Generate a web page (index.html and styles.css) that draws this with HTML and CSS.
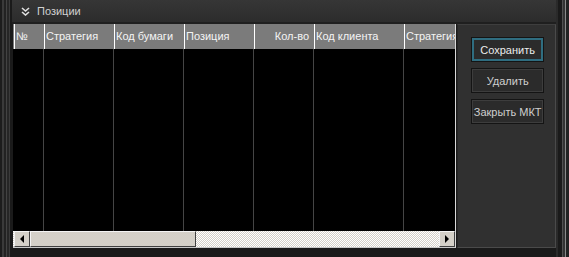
FILE: index.html
```html
<!DOCTYPE html>
<html lang="ru">
<head>
    <meta charset="UTF-8">
    <title>Позиции</title>
    <link rel="stylesheet" href="styles.css">
</head>
<body>
    <div class="frame">
        <div class="edge-left"></div>
        <div class="main">
            <div class="panel-head">
                <svg class="chevron" width="9" height="9" viewBox="0 0 9 9">
                    <path d="M1 1 L4.5 4 L8 1 M1 5 L4.5 8 L8 5" fill="none" stroke="#e0e0e0" stroke-width="1.6"/>
                </svg>
                <span class="panel-title">Позиции</span>
            </div>
            <div class="panel-body">
                <div class="grid">
                    <div class="grid-header">
                        <div class="hcell c1">№</div>
                        <div class="hcell c2">Стратегия</div>
                        <div class="hcell c3">Код бумаги</div>
                        <div class="hcell c4">Позиция</div>
                        <div class="hcell c5 right">Кол-во</div>
                        <div class="hcell c6">Код клиента</div>
                        <div class="hcell c7">Стратегия</div>
                    </div>
                    <div class="grid-rows">
                        <div class="col b1"></div>
                        <div class="col b2"></div>
                        <div class="col b3"></div>
                        <div class="col b4"></div>
                        <div class="col b5"></div>
                        <div class="col b6"></div>
                        <div class="col b7"></div>
                    </div>
                    <div class="hscroll">
                        <div class="scroll-btn"><span class="arrow-left"></span></div>
                        <div class="scroll-thumb"></div>
                        <div class="scroll-track"></div>
                        <div class="scroll-btn"><span class="arrow-right"></span></div>
                    </div>
                </div>
                <div class="actions">
                    <div class="btn primary">Сохранить</div>
                    <div class="btn">Удалить</div>
                    <div class="btn">Закрыть МКТ</div>
                </div>
            </div>
        </div>
        <div class="edge-right"></div>
    </div>
</body>
</html>
```

FILE: styles.css
```css
body {
    margin: 0;
    padding: 0;
    background-color: #1a1a1a;
    font-family: 'Liberation Sans', 'DejaVu Sans', sans-serif;
    font-size: 11px;
    overflow: hidden;
}
.frame {
    display: flex;
    width: 569px;
    height: 257px;
}
.edge-left {
    width: 12px;
    flex-shrink: 0;
    background: linear-gradient(to right,
        #1c1c1c 0, #1c1c1c 2px,
        #3a3a3a 2px, #3a3a3a 4px,
        #222 4px, #222 6px,
        #434343 6px, #434343 7px,
        #262626 7px, #262626 9px,
        #3c3c3c 9px, #3c3c3c 10px,
        #1a1a1a 10px);
}
.main {
    width: 544px;
    display: flex;
    flex-direction: column;
}
.panel-head {
    height: 22px;
    display: flex;
    align-items: center;
    padding-left: 9px;
    background: linear-gradient(#363636, #2c2c2c);
    border-bottom: 2px solid #1f1f1f;
}
.chevron {
    margin-right: 7px;
}
.panel-title {
    color: #d0d0d0;
    font-size: 11px;
}
.panel-body {
    display: flex;
    height: 224px;
}
.grid {
    width: 443px;
    margin-left: 1px;
    border-right: 1px solid #d8d8d8;
    border-bottom: 1px solid #c8c8c8;
    display: flex;
    flex-direction: column;
    background-color: #000;
}
.grid-header {
    height: 25px;
    display: flex;
    padding-left: 1px;
    background-color: #7b7b7b;
    overflow: hidden;
}
.hcell {
    box-sizing: border-box;
    flex-shrink: 0;
    border-left: 1px solid #fff;
    color: #f4f4f4;
    padding: 6px 0 0 1px;
    white-space: nowrap;
    overflow: hidden;
}
.hcell.right {
    text-align: right;
    padding-right: 5px;
}
.c1 { width: 30px; }
.c2 { width: 70px; }
.c3 { width: 70px; }
.c4 { width: 70px; }
.c5 { width: 60px; }
.c6 { width: 90px; }
.c7 { width: 51px; }
.grid-rows {
    flex: 1;
    display: flex;
}
.col {
    box-sizing: border-box;
    flex-shrink: 0;
    border-right: 1px solid #454545;
}
.b1 { width: 31px; }
.b2 { width: 70px; }
.b3 { width: 70px; }
.b4 { width: 70px; }
.b5 { width: 60px; }
.b6 { width: 90px; }
.b7 { width: 51px; border-right: none; }
.hscroll {
    height: 16px;
    display: flex;
    padding-left: 1px;
    background: repeating-conic-gradient(#d4d0c8 0 25%, #ffffff 0 50%) 0 0 / 2px 2px;
}
.scroll-btn {
    box-sizing: border-box;
    width: 16px;
    height: 16px;
    background-color: #d4d0c8;
    border: 1px solid;
    border-color: #f4f4f4 #404040 #404040 #f4f4f4;
    display: flex;
    justify-content: center;
    align-items: center;
}
.arrow-left {
    width: 0;
    height: 0;
    border-top: 4px solid transparent;
    border-bottom: 4px solid transparent;
    border-right: 4px solid #000;
}
.arrow-right {
    width: 0;
    height: 0;
    border-top: 4px solid transparent;
    border-bottom: 4px solid transparent;
    border-left: 4px solid #000;
}
.scroll-thumb {
    box-sizing: border-box;
    width: 166px;
    height: 16px;
    background-color: #d4d0c8;
    border: 1px solid;
    border-color: #f4f4f4 #404040 #404040 #f4f4f4;
}
.scroll-track {
    flex: 1;
}
.actions {
    box-sizing: border-box;
    width: 99px;
    margin-left: 1px;
    background-color: #303030;
    border-top: 1px solid #3e3e3e;
    border-left: 1px solid #262626;
    border-right: 1px solid #4a4a4a;
    border-bottom: 1px solid #4a4a4a;
    display: flex;
    flex-direction: column;
    align-items: flex-start;
    padding: 12px 0 0 13px;
    gap: 6px;
}
.btn {
    box-sizing: border-box;
    width: 73px;
    height: 25px;
    background-color: #2b2b2b;
    border: 1px solid #141414;
    box-shadow: inset 0 0 0 1px #3d3d3d;
    color: #cfcfcf;
    font-size: 11px;
    display: flex;
    justify-content: center;
    align-items: center;
}
.btn.primary {
    color: #ececec;
    box-shadow: inset 0 0 0 2px #2f6d80;
}
.edge-right {
    width: 13px;
    flex-shrink: 0;
    background: linear-gradient(to right,
        #2a2a2a 0, #2a2a2a 2px,
        #1a1a1a 2px, #1a1a1a 6px,
        #505050 6px, #505050 7px,
        #333 7px, #333 9px,
        #8a8a8a 9px, #8a8a8a 10px,
        #222 10px);
}
```
